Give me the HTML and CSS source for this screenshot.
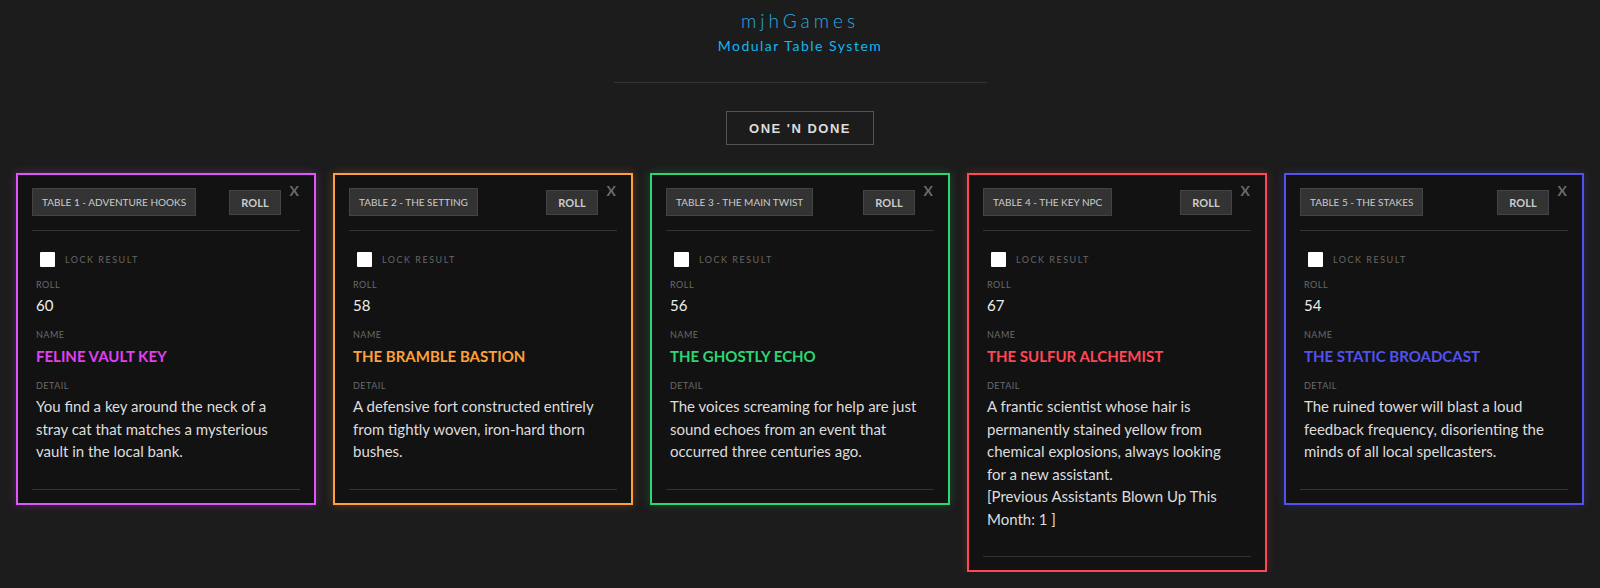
FILE: index.html
```html
<!DOCTYPE html>
<html lang="en">

<head>
    <meta charset="UTF-8">
    <meta name="viewport" content="width=device-width, initial-scale=1.0">
    <title>mjhGames - Modular Table System</title>
    <link rel="stylesheet" href="styles.css">
</head>

<body>
    <header class="top">
        <h1 class="brand">mjhGames</h1>
        <div class="tagline">Modular Table System</div>
        <hr class="divider">
        <button class="mode-btn">ONE 'N DONE</button>
    </header>

    <div class="tables">
        <!-- table 1 -->
        <div class="card pink">
            <span class="close">X</span>
            <div class="card-head">
                <button class="table-btn">TABLE 1 - ADVENTURE HOOKS</button>
                <button class="roll-btn">ROLL</button>
            </div>
            <div class="card-body">
                <label class="lock"><input type="checkbox"><span>LOCK RESULT</span></label>
                <div class="label">ROLL</div>
                <div class="roll">60</div>
                <div class="label">NAME</div>
                <div class="name">FELINE VAULT KEY</div>
                <div class="label">DETAIL</div>
                <div class="detail">You find a key around the neck of a stray cat that matches a mysterious vault in the local bank.</div>
            </div>
            <hr class="card-foot">
        </div>

        <!-- table 2 -->
        <div class="card orange">
            <span class="close">X</span>
            <div class="card-head">
                <button class="table-btn">TABLE 2 - THE SETTING</button>
                <button class="roll-btn">ROLL</button>
            </div>
            <div class="card-body">
                <label class="lock"><input type="checkbox"><span>LOCK RESULT</span></label>
                <div class="label">ROLL</div>
                <div class="roll">58</div>
                <div class="label">NAME</div>
                <div class="name">THE BRAMBLE BASTION</div>
                <div class="label">DETAIL</div>
                <div class="detail">A defensive fort constructed entirely from tightly woven, iron-hard thorn bushes.</div>
            </div>
            <hr class="card-foot">
        </div>

        <!-- table 3 -->
        <div class="card green">
            <span class="close">X</span>
            <div class="card-head">
                <button class="table-btn">TABLE 3 - THE MAIN TWIST</button>
                <button class="roll-btn">ROLL</button>
            </div>
            <div class="card-body">
                <label class="lock"><input type="checkbox"><span>LOCK RESULT</span></label>
                <div class="label">ROLL</div>
                <div class="roll">56</div>
                <div class="label">NAME</div>
                <div class="name">THE GHOSTLY ECHO</div>
                <div class="label">DETAIL</div>
                <div class="detail">The voices screaming for help are just sound echoes from an event that occurred three centuries ago.</div>
            </div>
            <hr class="card-foot">
        </div>

        <!-- table 4 -->
        <div class="card red">
            <span class="close">X</span>
            <div class="card-head">
                <button class="table-btn">TABLE 4 - THE KEY NPC</button>
                <button class="roll-btn">ROLL</button>
            </div>
            <div class="card-body">
                <label class="lock"><input type="checkbox"><span>LOCK RESULT</span></label>
                <div class="label">ROLL</div>
                <div class="roll">67</div>
                <div class="label">NAME</div>
                <div class="name">THE SULFUR ALCHEMIST</div>
                <div class="label">DETAIL</div>
                <div class="detail">A frantic scientist whose hair is permanently stained yellow from chemical explosions, always looking for a new assistant.<br>[Previous Assistants Blown Up This Month: 1 ]</div>
            </div>
            <hr class="card-foot">
        </div>

        <!-- table 5 -->
        <div class="card blue">
            <span class="close">X</span>
            <div class="card-head">
                <button class="table-btn">TABLE 5 - THE STAKES</button>
                <button class="roll-btn">ROLL</button>
            </div>
            <div class="card-body">
                <label class="lock"><input type="checkbox"><span>LOCK RESULT</span></label>
                <div class="label">ROLL</div>
                <div class="roll">54</div>
                <div class="label">NAME</div>
                <div class="name">THE STATIC BROADCAST</div>
                <div class="label">DETAIL</div>
                <div class="detail">The ruined tower will blast a loud feedback frequency, disorienting the minds of all local spellcasters.</div>
            </div>
            <hr class="card-foot">
        </div>
    </div>
</body>

</html>
```

FILE: styles.css
```css
* {
    margin: 0;
    padding: 0;
    box-sizing: border-box;
}

body {
    background-color: #1c1c1c;
    color: #ddd;
    font-family: "Lato", "Noto Sans", sans-serif;
}

/* header */
.top {
    display: flex;
    flex-direction: column;
    align-items: center;
    padding-top: 9px;
}
.brand {
    font-size: 19px;
    line-height: 24px;
    font-weight: 300;
    letter-spacing: 4px;
    color: #2aa8e2;
}
.tagline {
    margin-top: 4px;
    font-size: 14px;
    line-height: 18px;
    font-weight: 400;
    letter-spacing: 1.5px;
    color: #12b6f2;
}
.divider {
    width: 373px;
    margin-top: 27px;
    border: none;
    border-top: 1px solid #333;
}
.mode-btn {
    margin-top: 28px;
    width: 148px;
    height: 34px;
    font-family: "Liberation Sans", Arial, sans-serif;
    font-size: 13px;
    font-weight: bold;
    letter-spacing: 1.5px;
    color: #ddd;
    background-color: #1c1c1c;
    border: 1px solid #555;
}

/* cards */
.tables {
    display: flex;
    align-items: flex-start;
    justify-content: center;
    gap: 17px;
    margin-top: 28px;
}
.card {
    position: relative;
    width: 300px;
    padding: 13px 14px 13px;
    background-color: #121212;
    border: 2px solid #888;
}
.card.pink { border-color: #e056fd; box-shadow: 0 0 9px rgba(224, 86, 253, .25); }
.card.orange { border-color: #ffa03c; box-shadow: 0 0 9px rgba(255, 160, 60, .25); }
.card.green { border-color: #2ed573; box-shadow: 0 0 9px rgba(46, 213, 115, .25); }
.card.red { border-color: #ff4757; box-shadow: 0 0 9px rgba(255, 71, 87, .25); }
.card.blue { border-color: #5352ed; box-shadow: 0 0 9px rgba(83, 82, 237, .25); }

.pink .name { color: #e040f0; }
.orange .name { color: #ffa03c; }
.green .name { color: #2ed573; }
.red .name { color: #ff4757; }
.blue .name { color: #5352ed; }

.close {
    position: absolute;
    top: 7px;
    right: 15px;
    font-size: 14px;
    font-weight: bold;
    color: #6b6b6b;
    cursor: pointer;
}

.card-head {
    display: flex;
    align-items: center;
    justify-content: space-between;
    padding-right: 19px;
    padding-bottom: 14px;
    border-bottom: 1px solid #333;
}
.table-btn,
.roll-btn {
    font-family: "Lato", "Noto Sans", sans-serif;
    font-size: 11px;
    color: #ccc;
    background-color: #333;
    border: 1px solid #444;
}
.table-btn {
    height: 28px;
    padding: 0 9px;
    font-size: 10px;
}
.roll-btn {
    height: 25px;
    width: 52px;
    font-weight: bold;
}

.card-body {
    padding: 0 4px;
}
.lock {
    display: flex;
    align-items: center;
    gap: 10px;
    margin-top: 21px;
    padding-left: 4px;
    font-size: 9px;
    letter-spacing: 1.5px;
    color: #666;
}
.lock input {
    appearance: none;
    width: 15px;
    height: 15px;
    background-color: #fff;
    border-radius: 1px;
}
.label {
    margin-top: 12px;
    font-size: 9px;
    line-height: 12px;
    letter-spacing: .5px;
    color: #6a6a6a;
}
.roll {
    margin-top: 3px;
    font-size: 15px;
    line-height: 22px;
    color: #eee;
}
.name {
    margin-top: 4px;
    font-size: 15px;
    line-height: 22px;
    font-weight: bold;
}
.detail {
    margin-top: 3px;
    padding-right: 10px;
    font-size: 15px;
    line-height: 1.5;
    color: #ddd;
}
.roll + .label,
.name + .label {
    margin-top: 13px;
}
.card-foot {
    margin-top: 26px;
    border: none;
    border-top: 1px solid #333;
}
```
